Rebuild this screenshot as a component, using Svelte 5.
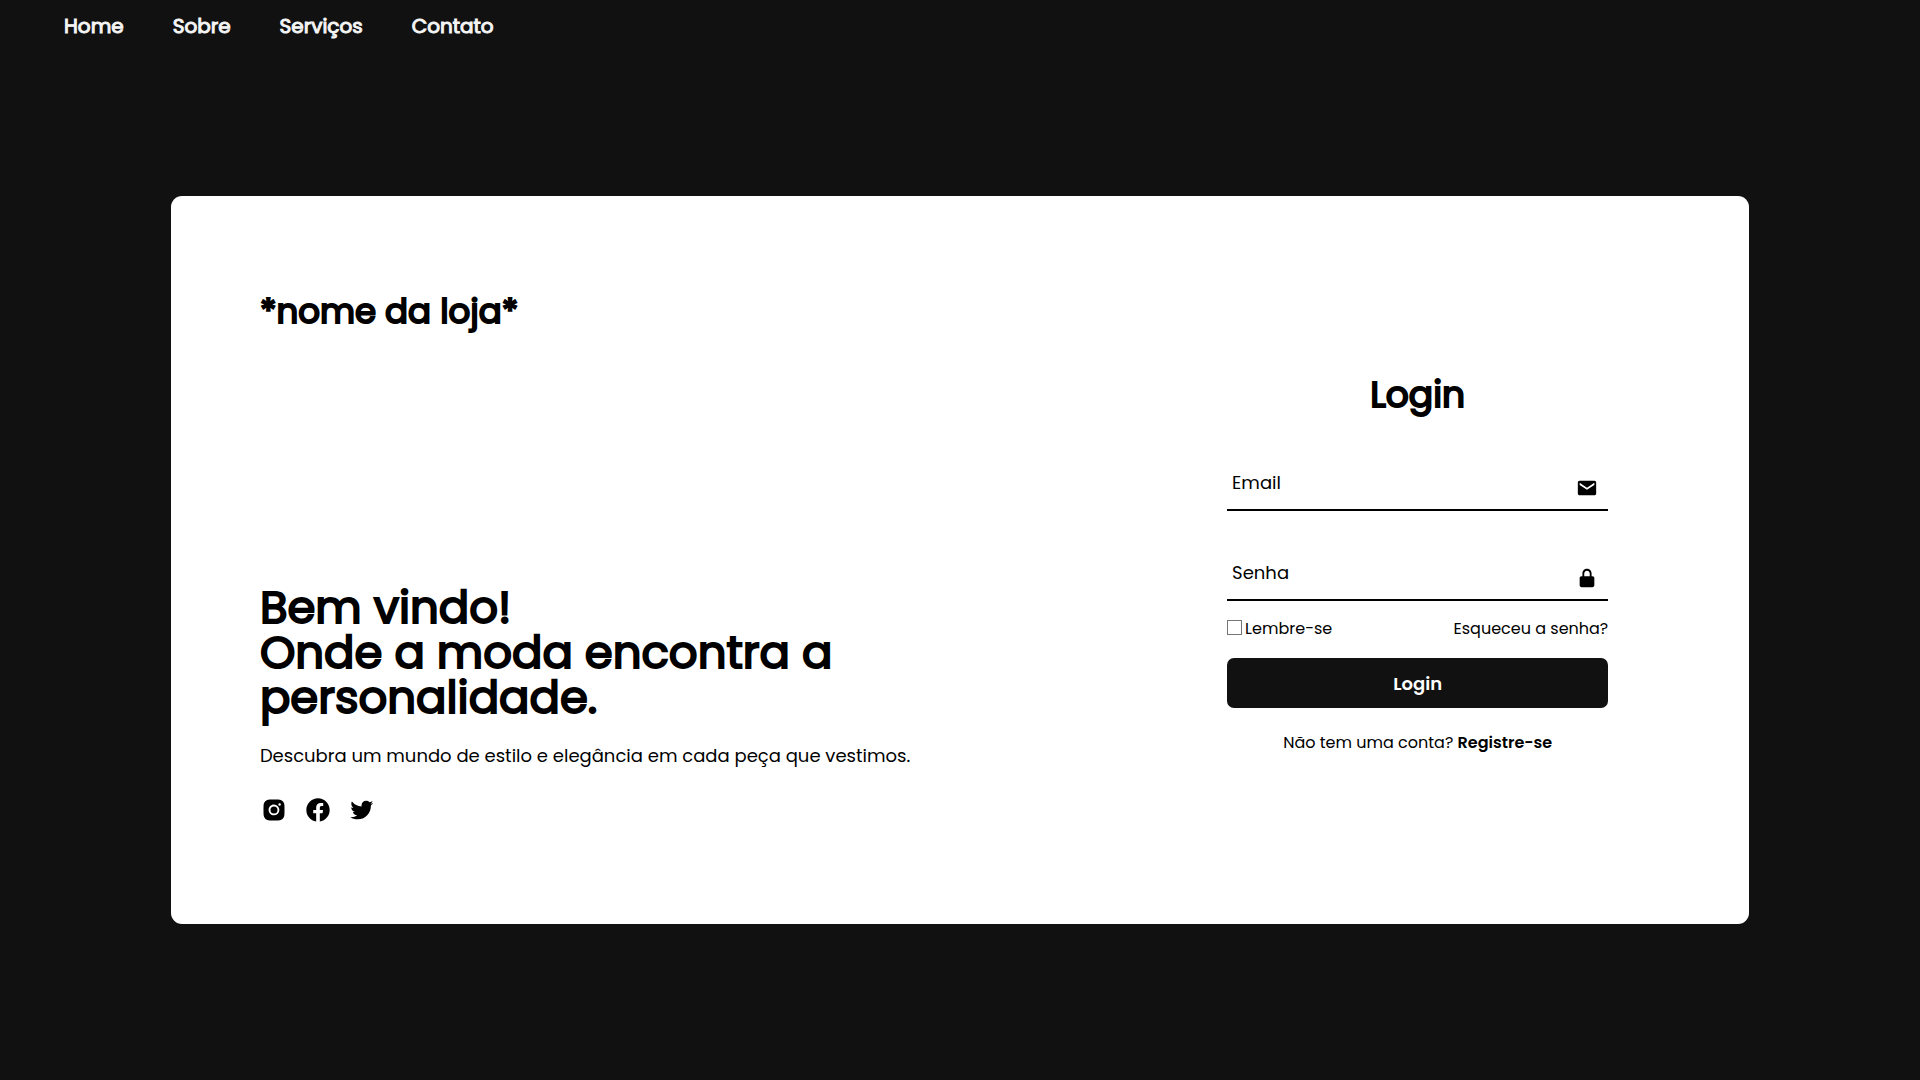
<script>
  let email = $state('');
  let password = $state('');
  let remember = $state(false);

  const links = ['Home', 'Sobre', 'Serviços', 'Contato'];
  const socials = [
    {
      name: 'Instagram',
      d: 'M20.947 8.305a6.53 6.53 0 0 0-.419-2.216 4.61 4.61 0 0 0-2.633-2.633 6.606 6.606 0 0 0-2.186-.42c-.962-.043-1.267-.055-3.709-.055s-2.755 0-3.71.055a6.606 6.606 0 0 0-2.185.42 4.607 4.607 0 0 0-2.633 2.633 6.554 6.554 0 0 0-.419 2.185c-.043.963-.056 1.268-.056 3.71s0 2.754.056 3.71c.015.748.156 1.486.419 2.187a4.61 4.61 0 0 0 2.634 2.632 6.584 6.584 0 0 0 2.185.45c.963.043 1.268.056 3.71.056s2.755 0 3.71-.056a6.59 6.59 0 0 0 2.186-.419 4.615 4.615 0 0 0 2.633-2.633c.263-.7.404-1.438.419-2.187.043-.962.056-1.267.056-3.71-.002-2.442-.002-2.752-.058-3.709zm-8.953 8.297c-2.554 0-4.623-2.069-4.623-4.623s2.069-4.623 4.623-4.623a4.623 4.623 0 0 1 0 9.246zm4.807-8.339a1.077 1.077 0 1 1 0-2.155 1.077 1.077 0 0 1 0 2.155z M14.997 11.979a3.003 3.003 0 1 1-6.006 0 3.003 3.003 0 0 1 6.006 0z',
    },
    {
      name: 'Facebook',
      d: 'M12.001 2.002c-5.522 0-9.999 4.477-9.999 9.999 0 4.99 3.656 9.126 8.437 9.879v-6.988h-2.54v-2.891h2.54V9.798c0-2.508 1.493-3.891 3.776-3.891 1.094 0 2.24.195 2.24.195v2.459h-1.264c-1.24 0-1.628.772-1.628 1.563v1.875h2.771l-.443 2.891h-2.328v6.988C18.344 21.129 22 16.992 22 12.001c0-5.522-4.477-9.999-9.999-9.999z',
    },
    {
      name: 'Twitter',
      d: 'M19.633 7.997c.013.175.013.349.013.523 0 5.325-4.053 11.461-11.46 11.461-2.282 0-4.402-.661-6.186-1.809.324.037.636.05.973.05a8.07 8.07 0 0 0 5.001-1.721 4.036 4.036 0 0 1-3.767-2.793c.249.037.499.062.761.062.361 0 .724-.05 1.061-.137a4.027 4.027 0 0 1-3.23-3.953v-.05c.537.299 1.16.486 1.82.511a4.022 4.022 0 0 1-1.796-3.354c0-.748.199-1.434.548-2.032a11.457 11.457 0 0 0 8.306 4.215c-.062-.3-.1-.611-.1-.923a4.026 4.026 0 0 1 4.028-4.028c1.16 0 2.207.486 2.943 1.272a7.957 7.957 0 0 0 2.556-.973 4.02 4.02 0 0 1-1.771 2.22 8.073 8.073 0 0 0 2.319-.624 8.645 8.645 0 0 1-2.019 2.083z',
    },
  ];
</script>

<div class="page">
  <header>
    <nav>
      {#each links as link}
        <a href="#{link.toLowerCase()}">{link}</a>
      {/each}
    </nav>
  </header>

  <main>
    <div class="card">
      <section class="intro">
        <h2 class="store">*nome da loja*</h2>
        <div class="welcome">
          <h1>Bem vindo!<br />Onde a moda encontra a personalidade.</h1>
          <p>Descubra um mundo de estilo e elegância em cada peça que vestimos.</p>
          <div class="socials">
            {#each socials as social}
              <a href="#{social.name.toLowerCase()}" aria-label={social.name}>
                <svg viewBox="0 0 24 24" aria-hidden="true"><path d={social.d} /></svg>
              </a>
            {/each}
          </div>
        </div>
      </section>

      <section class="access">
        <form onsubmit={(event) => event.preventDefault()}>
          <h2>Login</h2>

          <div class="fields">
            <div class="field" class:filled={email}>
              <input id="email" type="email" bind:value={email} />
              <label for="email">Email</label>
              <svg viewBox="0 0 24 24" aria-hidden="true">
                <path d="M20 4H4c-1.103 0-2 .897-2 2v12c0 1.103.897 2 2 2h16c1.103 0 2-.897 2-2V6c0-1.103-.897-2-2-2zm0 4.7-8 5.334L4 8.7V6.297l8 5.333 8-5.333V8.7z" />
              </svg>
            </div>

            <div class="field" class:filled={password}>
              <input id="password" type="password" bind:value={password} />
              <label for="password">Senha</label>
              <svg viewBox="0 0 24 24" aria-hidden="true">
                <path d="M20 12c0-1.103-.897-2-2-2h-1V7c0-2.757-2.243-5-5-5S7 4.243 7 7v3H6c-1.103 0-2 .897-2 2v8c0 1.103.897 2 2 2h12c1.103 0 2-.897 2-2v-8zM9 7c0-1.654 1.346-3 3-3s3 1.346 3 3v3H9V7z" />
              </svg>
            </div>
          </div>

          <div class="options">
            <label><input type="checkbox" bind:checked={remember} />Lembre-se</label>
            <a href="#recuperar">Esqueceu a senha?</a>
          </div>

          <button type="submit">Login</button>

          <p class="register">Não tem uma conta? <a href="#registro">Registre-se</a></p>
        </form>
      </section>
    </div>
  </main>
</div>

<style>
  :global(body) {
    margin: 0;
    background: #111;
  }

  .page {
    display: flex;
    flex-direction: column;
    min-height: 100vh;
    font-family: Poppins, Inter, sans-serif;
    color: #000;
  }

  h1,
  h2,
  p {
    margin: 0;
  }

  h1,
  h2 {
    font-weight: 400;
    -webkit-text-stroke: 2px currentColor;
  }

  h2 {
    font-size: 36px;
    line-height: 48px;
  }

  a {
    color: inherit;
    text-decoration: none;
  }

  header {
    padding: 12px 64px 0;
  }

  nav {
    display: flex;
    flex-wrap: wrap;
    gap: 49px;
    color: #f5f5f5;
    font-size: 20px;
    line-height: 28px;
    -webkit-text-stroke: 1px currentColor;
  }

  main {
    flex: 1;
    display: grid;
    place-items: center;
  }

  .card {
    display: grid;
    grid-template-columns: 58fr 42fr;
    width: 82.2%;
    background: #fff;
    border-radius: 11px;
    overflow: hidden;
  }

  .intro {
    display: flex;
    flex-direction: column;
    justify-content: space-between;
    gap: 250px;
    padding: 91px 89px 100px;
  }

  .store {
    font-size: 34px;
  }

  h1 {
    font-size: 45px;
    line-height: 45px;
  }

  .welcome p {
    margin-top: 22px;
    font-size: 18px;
    line-height: 28px;
  }

  .socials {
    display: flex;
    gap: 16px;
    margin-top: 26px;
  }

  .socials a {
    display: flex;
  }

  .socials svg {
    width: 28px;
    height: 28px;
  }

  .access {
    display: grid;
    place-items: center;
  }

  form {
    display: flex;
    flex-direction: column;
    width: 57.5%;
    padding-top: 6px;
  }

  form h2 {
    text-align: center;
  }

  .fields {
    display: flex;
    flex-direction: column;
    gap: 34px;
    margin-top: 36px;
  }

  .field {
    position: relative;
    display: flex;
    height: 54px;
    border-bottom: 2px solid #000;
  }

  .field input {
    flex: 1;
    min-width: 0;
    padding: 0 40px 0 6px;
    border: 0;
    outline: 0;
    background: none;
    font: inherit;
    font-size: 18px;
  }

  .field label {
    position: absolute;
    top: 14px;
    left: 5px;
    font-size: 18px;
    line-height: 28px;
    pointer-events: none;
  }

  .field.filled label {
    top: -12px;
  }

  .field svg {
    position: absolute;
    top: 22px;
    right: 10px;
    width: 22px;
    height: 22px;
  }

  .options {
    display: flex;
    justify-content: space-between;
    margin-top: 16px;
    font-size: 16px;
    line-height: 24px;
  }

  .options label {
    display: flex;
    gap: 3px;
  }

  .options input {
    appearance: none;
    width: 15px;
    height: 15px;
    margin: 3px 0 0;
    border: 1px solid #767676;
    background: #fff;
  }

  .options input:checked {
    background: #111;
  }

  button {
    height: 50px;
    margin-top: 17px;
    border: 0;
    border-radius: 7px;
    background: #111;
    color: #fff;
    font: inherit;
    font-size: 18px;
    font-weight: 600;
    cursor: pointer;
  }

  .register {
    margin-top: 23px;
    font-size: 16px;
    line-height: 24px;
    text-align: center;
  }

  .register a {
    font-weight: 600;
  }
</style>
